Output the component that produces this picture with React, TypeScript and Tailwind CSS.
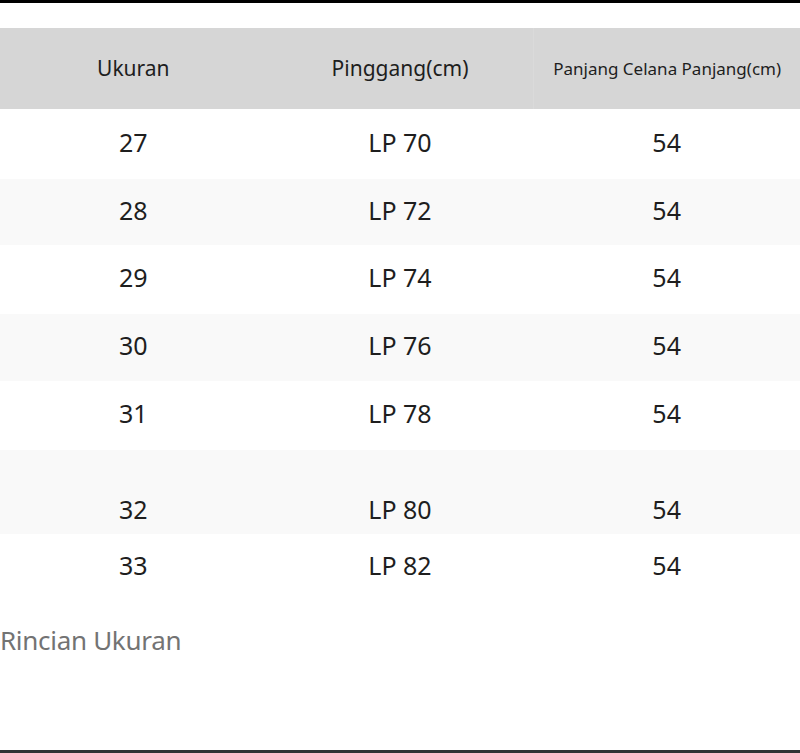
const rows = [
  { size: '27', waist: 'LP 70', length: '54', h: 'h-[70px]', bg: 'bg-white' },
  { size: '28', waist: 'LP 72', length: '54', h: 'h-[66px]', bg: 'bg-[#f9f9f9]' },
  { size: '29', waist: 'LP 74', length: '54', h: 'h-[69px]', bg: 'bg-white' },
  { size: '30', waist: 'LP 76', length: '54', h: 'h-[67px]', bg: 'bg-[#f9f9f9]' },
  { size: '31', waist: 'LP 78', length: '54', h: 'h-[69px]', bg: 'bg-white' },
  { size: '32', waist: 'LP 80', length: '54', h: 'h-[84px]', bg: 'bg-[#f9f9f9]', bottom: true },
  { size: '33', waist: 'LP 82', length: '54', h: 'h-[66px]', bg: 'bg-white' },
];

export default function App() {
  return (
    <div className="w-[800px] h-[753px] bg-white flex flex-col font-['Noto_Sans',sans-serif] text-[#1e1e1e]">
      <div className="h-[3px] bg-black" />
      <div className="h-[25px]" />
      <div className="grid grid-cols-3 h-[81px] bg-[#d6d6d6] text-[21px]">
        <div className="flex items-center justify-center">Ukuran</div>
        <div className="flex items-center justify-center">Pinggang(cm)</div>
        <div className="flex items-center justify-center border-l border-[#dadada] text-[17px]">
          Panjang Celana Panjang(cm)
        </div>
      </div>
      {rows.map((r) => (
        <div
          key={r.size}
          className={`grid grid-cols-3 text-[25px] leading-[34px] ${r.h} ${r.bg} ${r.bottom ? 'items-end pb-[8px]' : 'items-center pb-[5px]'}`}
        >
          <div className="text-center">{r.size}</div>
          <div className="text-center">{r.waist}</div>
          <div className="text-center">{r.length}</div>
        </div>
      ))}
      <div className="pt-[22px] text-[26px] text-[#737373] leading-[36px] tracking-[-0.3px]">Rincian Ukuran</div>
      <div className="flex-1" />
      <div className="h-[3px] bg-[#333333]" />
    </div>
  );
}
